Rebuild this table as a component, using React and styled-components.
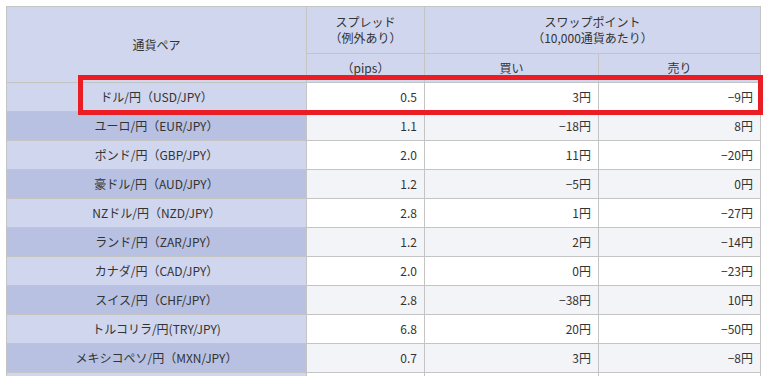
import React from "react";
import styled, { createGlobalStyle } from "styled-components";

const Global = createGlobalStyle`
  html, body { margin: 0; padding: 0; background: #fff; }
  body { font-family: "Noto Sans CJK JP", "Noto Sans", sans-serif; }
`;

const Page = styled.div`
  padding: 6px 0 0 6px;
`;

const Frame = styled.div`
  position: relative;
  width: 754px;
`;

const Table = styled.table`
  width: 754px;
  border-collapse: collapse;
  table-layout: fixed;
  font-size: 12px;
  color: #333;
  font-family: "Noto Sans CJK JP", "Noto Sans", sans-serif;
`;

const Th = styled.th`
  background: #d0d6ee;
  border: 1px solid #c4c4c4;
  font-weight: normal;
  text-align: center;
  vertical-align: middle;
  line-height: 16px;
  height: ${(p) => p.$h || 28}px;
  padding: 0;
`;

const PairCell = styled.td`
  background: ${(p) => (p.$dark ? "#b8c1e2" : "#d0d6ee")};
  border: 1px solid #c4c4c4;
  text-align: center;
  height: 28px;
  padding: 0;
  line-height: 16px;
`;

const NumCell = styled.td`
  background: ${(p) => (p.$alt ? "#f3f4f8" : "#ffffff")};
  border: 1px solid #c4c4c4;
  text-align: right;
  padding: 0 7px 0 0;
  height: 28px;
  line-height: 16px;
`;

const Highlight = styled.div`
  position: absolute;
  left: 72px;
  top: 69px;
  width: 685px;
  height: 40px;
  box-sizing: border-box;
  border: 5px solid #ea1c24;
  pointer-events: none;
`;

const M = "\u2212";

const rows = [
  ["ドル/円（USD/JPY）", "0.5", "3円", M + "9円"],
  ["ユーロ/円（EUR/JPY）", "1.1", M + "18円", "8円"],
  ["ポンド/円（GBP/JPY）", "2.0", "11円", M + "20円"],
  ["豪ドル/円（AUD/JPY）", "1.2", M + "5円", "0円"],
  ["NZドル/円（NZD/JPY）", "2.8", "1円", M + "27円"],
  ["ランド/円（ZAR/JPY）", "1.2", "2円", M + "14円"],
  ["カナダ/円（CAD/JPY）", "2.0", "0円", M + "23円"],
  ["スイス/円（CHF/JPY）", "2.8", M + "38円", "10円"],
  ["トルコリラ/円(TRY/JPY)", "6.8", "20円", M + "50円"],
  ["メキシコペソ/円（MXN/JPY）", "0.7", "3円", M + "8円"],
  ["", "", "", ""],
];

export default function App() {
  return (
    <Page>
      <Global />
      <Frame>
        <Table>
          <colgroup>
            <col style={{ width: 300 }} />
            <col style={{ width: 118 }} />
            <col style={{ width: 174 }} />
            <col style={{ width: 162 }} />
          </colgroup>
          <thead>
            <tr>
              <Th rowSpan={2}>通貨ペア</Th>
              <Th $h={46}>
                スプレッド
                <br />
                （例外あり）
              </Th>
              <Th colSpan={2} $h={46}>
                スワップポイント
                <br />
                （10,000通貨あたり）
              </Th>
            </tr>
            <tr>
              <Th>（pips）</Th>
              <Th>買い</Th>
              <Th>売り</Th>
            </tr>
          </thead>
          <tbody>
            {rows.map((r, i) => (
              <tr key={i}>
                <PairCell $dark={i % 2 === 1}>{r[0]}</PairCell>
                <NumCell $alt={i % 2 === 1}>{r[1]}</NumCell>
                <NumCell $alt={i % 2 === 1}>{r[2]}</NumCell>
                <NumCell $alt={i % 2 === 1}>{r[3]}</NumCell>
              </tr>
            ))}
          </tbody>
        </Table>
        <Highlight />
      </Frame>
    </Page>
  );
}
